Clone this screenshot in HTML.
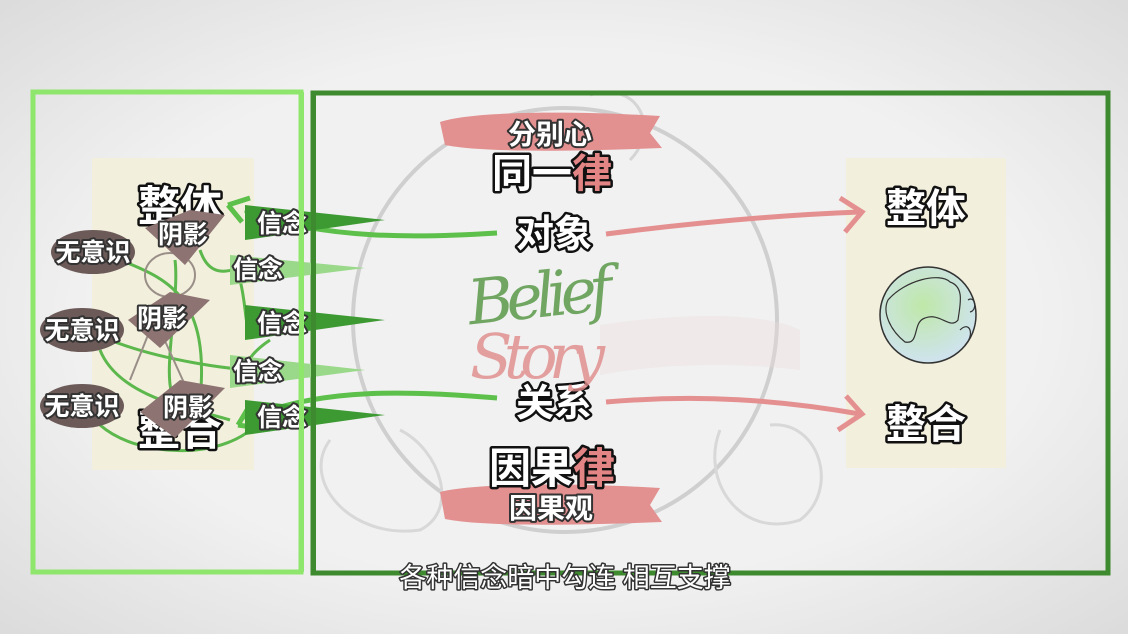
<!DOCTYPE html>
<html><head><meta charset="utf-8"><style>
html,body{margin:0;padding:0;width:1128px;height:634px;overflow:hidden;background:#eeeeee}
svg{display:block}
text{font-family:"Liberation Sans","Noto Sans CJK SC",sans-serif;font-weight:bold;paint-order:stroke;stroke-linejoin:round}
.o{fill:#fff;stroke:#111;stroke-width:5}
.ow{fill:#fff;stroke:#333;stroke-width:4}
.hw{font-family:"DejaVu Serif","Liberation Serif",serif;font-style:italic;font-weight:normal}
</style></head><body>
<svg width="1128" height="634" viewBox="0 0 1128 634">
<defs>
<radialGradient id="bg" cx="50%" cy="50%" r="70%"><stop offset="0.6" stop-color="#f1f1f1"/><stop offset="1" stop-color="#dcdcdc"/></radialGradient>
<radialGradient id="gl" cx="45%" cy="40%" r="60%"><stop offset="0" stop-color="#bfe8a8"/><stop offset="1" stop-color="#cfe3ee"/></radialGradient>
</defs>
<rect width="1128" height="634" fill="url(#bg)"/>
<circle cx="565" cy="320" r="212" fill="none" stroke="#cfcfcf" stroke-width="4"/>
<path d="M590 95 C640 80 660 130 630 160" fill="none" stroke="#d5d5d5" stroke-width="3"/>
<path d="M330 440 C300 480 350 540 420 530 C460 510 440 450 400 430" fill="none" stroke="#d8d8d8" stroke-width="3"/>
<path d="M720 430 C700 480 740 540 800 520 C840 490 820 420 770 425" fill="none" stroke="#d8d8d8" stroke-width="3"/>
<path d="M600 325 C700 310 770 315 800 330 L800 370 C760 365 680 360 600 375" fill="#ecd9da" opacity="0.35"/>
<rect x="92" y="158" width="162" height="312" fill="#f2efdc"/>
<rect x="846" y="158" width="160" height="310" fill="#f2efdc"/>
<rect x="33" y="92" width="268" height="480" fill="none" stroke="#8fe66c" stroke-width="5"/>
<rect x="313" y="93" width="795" height="480" fill="none" stroke="#3e8a2f" stroke-width="5"/>
<path d="M440 122 C470 112 560 110 660 116 L650 133 L662 148 C560 152 480 152 445 145 Z" fill="#e39090"/>
<path d="M440 492 C470 484 560 482 660 488 L650 505 L662 522 C560 526 480 526 445 519 Z" fill="#e39090"/>
<text x="550" y="144" font-size="28" text-anchor="middle" class="ow">分别心</text>
<text x="552" y="187" font-size="40" text-anchor="middle" class="o">同一<tspan fill="#e38585">律</tspan></text>
<text x="554" y="247" font-size="38" text-anchor="middle" class="o">对象</text>
<text x="554" y="416" font-size="38" text-anchor="middle" class="o">关系</text>
<text x="552" y="483" font-size="42" text-anchor="middle" class="o">因果<tspan fill="#e38585">律</tspan></text>
<text x="551" y="518" font-size="28" text-anchor="middle" class="ow">因果观</text>
<text x="468" y="318" font-size="62" fill="#5a9a4a" class="hw" transform="rotate(-6 530 300)" opacity="0.85" textLength="145" style="stroke:none">Belief</text>
<text x="470" y="378" font-size="62" fill="#e08a8a" class="hw" opacity="0.8" textLength="135" style="stroke:none">Story</text>
<path d="M606 234 C700 222 780 215 860 212" fill="none" stroke="#e59090" stroke-width="5"/>
<path d="M840 198 L862 212 L845 232" fill="none" stroke="#e59090" stroke-width="5"/>
<path d="M606 402 C700 394 780 400 860 414" fill="none" stroke="#e59090" stroke-width="5"/>
<path d="M846 396 L862 414 L838 430" fill="none" stroke="#e59090" stroke-width="5"/>
<text x="926" y="222" font-size="40" text-anchor="middle" class="o">整体</text>
<text x="926" y="438" font-size="40" text-anchor="middle" class="o">整合</text>
<circle cx="928" cy="315" r="48" fill="url(#gl)" stroke="#333" stroke-width="1.5"/>
<path d="M888 300 C905 280 940 272 950 282 C965 287 960 305 958 320 C950 330 940 312 925 318 C912 322 920 345 905 342 C890 330 882 312 888 300Z" fill="none" stroke="#333" stroke-width="1.2"/>
<path d="M960 330 C970 320 975 335 965 345 M968 300 C975 295 978 310 970 312" fill="none" stroke="#333" stroke-width="1.2"/>
<path d="M497 233 C420 238 320 240 245 210" fill="none" stroke="#5cc04a" stroke-width="5"/>
<path d="M228 205 L250 198 M228 205 L242 222" stroke="#5cc04a" stroke-width="5"/>
<path d="M497 398 C420 392 320 385 245 420" fill="none" stroke="#5cc04a" stroke-width="5"/>
<path d="M238 425 L250 405 M238 425 L258 428" stroke="#5cc04a" stroke-width="5"/>
<g fill="none" stroke="#5cb84c" stroke-width="3">
<path d="M125 262 C170 280 210 300 200 400"/>
<path d="M100 350 C120 400 200 410 230 420"/>
<path d="M110 340 C160 360 230 370 260 370"/>
<path d="M100 425 C140 460 230 460 260 420"/>
<path d="M200 250 C210 280 230 270 240 268"/>
<path d="M175 260 C180 300 160 380 175 400"/>
<path d="M240 280 C250 320 240 340 265 320"/>
<path d="M270 340 C240 360 240 380 260 370"/>
</g>
<g fill="none" stroke="#9a8f88" stroke-width="2"><ellipse cx="170" cy="275" rx="25" ry="22"/><path d="M150 330 L130 380 M160 330 L185 385"/></g>
<text x="180" y="221" font-size="42" text-anchor="middle" class="o">整体</text>
<text x="180" y="445" font-size="42" text-anchor="middle" class="o">整合</text>
<path d="M245 205 L385 220 L245 240 Z" fill="#3d9a33"/>
<path d="M230 255 L365 268 L230 285 Z" fill="#9ad88a"/>
<path d="M245 305 L385 320 L245 340 Z" fill="#3d9a33"/>
<path d="M230 355 L365 370 L230 388 Z" fill="#9ad88a"/>
<path d="M245 400 L385 415 L245 435 Z" fill="#3d9a33"/>
<g font-size="25">
<text x="257" y="232" class="ow">信念</text>
<text x="233" y="278" class="ow">信念</text>
<text x="257" y="332" class="ow">信念</text>
<text x="233" y="380" class="ow">信念</text>
<text x="257" y="426" class="ow">信念</text>
</g>
<rect x="299" y="92" width="5" height="480" fill="#8fe66c"/>
<rect x="311" y="93" width="5" height="480" fill="#3e8a2f"/>
<g fill="#6b5a58">
<ellipse cx="93" cy="252" rx="42" ry="22"/><ellipse cx="82" cy="330" rx="42" ry="22"/><ellipse cx="82" cy="406" rx="42" ry="22"/>
</g>
<g font-size="25" text-anchor="middle">
<text x="93" y="261" class="ow">无意识</text>
<text x="82" y="339" class="ow">无意识</text>
<text x="82" y="415" class="ow">无意识</text>
</g>
<g fill="#8d7472">
<path d="M145 228 L190 210 L225 215 L185 265 Z"/>
<path d="M128 320 L170 292 L210 300 L160 348 Z"/>
<path d="M140 412 L180 380 L225 388 L175 438 Z"/>
</g>
<g font-size="25" text-anchor="middle">
<text x="183" y="243" class="ow">阴影</text>
<text x="162" y="327" class="ow">阴影</text>
<text x="188" y="416" class="ow">阴影</text>
</g>
<text x="565" y="587" font-size="27" text-anchor="middle" fill="#fff" stroke="#333" stroke-width="3" style="font-weight:normal">各种信念暗中勾连 相互支撑</text>
</svg>
</body></html>
